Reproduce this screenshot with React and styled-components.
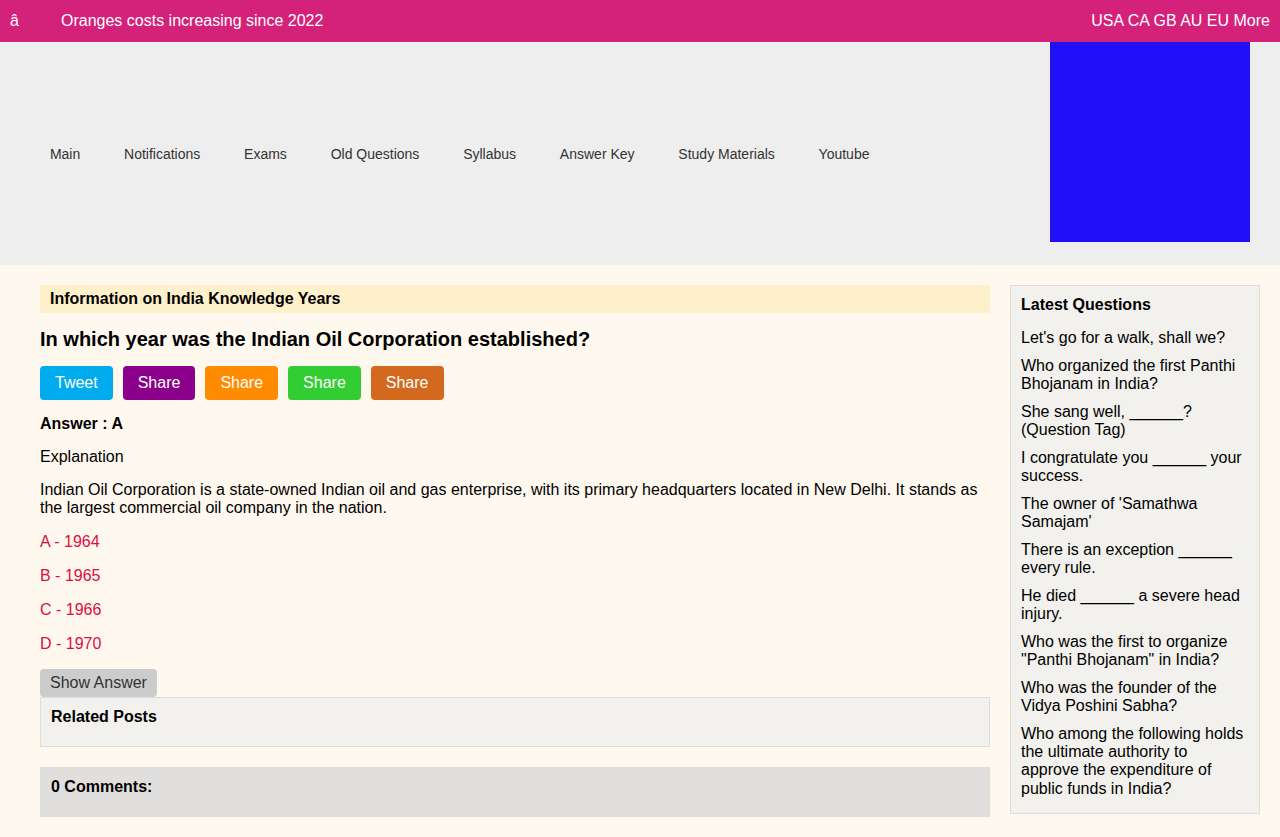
import React from "react";
import styled, { createGlobalStyle } from "styled-components";

const GlobalStyle = createGlobalStyle`
  html, body {
    margin: 0;
    padding: 0;
    background: #fff8ee;
    font-family: "Liberation Sans", Arial, sans-serif;
    color: #000;
  }
  * {
    box-sizing: border-box;
  }
`;

const TopBar = styled.div`
  height: 42px;
  background: #d4217a;
  color: #fff;
  font-size: 16px;
  display: flex;
  align-items: center;
  padding: 0 10px;
`;

const Glyph = styled.span`
  width: 51px;
`;

const Ticker = styled.span`
  flex: 1;
`;

const Regions = styled.span`
  white-space: nowrap;
`;

const Header = styled.header`
  height: 223px;
  background: #eeeeee;
  display: flex;
  align-items: center;
  padding: 0 30px 0 28px;
`;

const Nav = styled.nav`
  flex: 1;
  display: flex;
`;

const NavLink = styled.a`
  font-size: 14px;
  color: #333;
  padding: 0 21.9px;
  text-decoration: none;
  cursor: pointer;
`;

const Banner = styled.div`
  width: 200px;
  height: 200px;
  background: #2010f8;
  align-self: flex-start;
`;

const Page = styled.div`
  display: flex;
  gap: 20px;
  padding: 20px 20px 0 40px;
  align-items: flex-start;
`;

const Main = styled.main`
  width: 950px;
`;

const Category = styled.div`
  background: #fff0cc;
  font-weight: bold;
  font-size: 16px;
  line-height: 18px;
  padding: 5px 10px;
`;

const Title = styled.h1`
  font-size: 20px;
  line-height: 23px;
  margin: 15px 0 15px;
`;

const ShareRow = styled.div`
  display: flex;
  gap: 10px;
`;

const ShareButton = styled.a`
  background: ${(p) => p.color};
  color: #fff;
  font-size: 16px;
  line-height: 18px;
  padding: 8px 15px;
  border-radius: 4px;
  cursor: pointer;
`;

const Para = styled.p`
  font-size: 16px;
  line-height: 18px;
  margin: 15px 0;
  font-weight: ${(p) => (p.bold ? "bold" : "normal")};
`;

const Option = styled.p`
  font-size: 16px;
  line-height: 18px;
  margin: 16px 0;
  color: #dc0d3f;
`;

const ShowButton = styled.button`
  display: block;
  font-family: inherit;
  font-size: 16px;
  line-height: 18px;
  color: #333;
  background: #cccccc;
  border: none;
  border-radius: 4px;
  padding: 5px 10px;
  margin-top: 16px;
`;

const Panel = styled.div`
  background: ${(p) => p.bg};
  border: ${(p) => (p.bordered ? "1px solid #dddddd" : "none")};
  padding: ${(p) => (p.bordered ? "10px 10px 20px" : "11px 11px 21px")};
  margin-bottom: 20px;
  font-weight: bold;
  font-size: 16px;
  line-height: 18px;
`;

const Sidebar = styled.aside`
  width: 250px;
  background: #f2f1ed;
  border: 1px solid #dddddd;
  padding: 10px 10px 6px;
`;

const SideHeading = styled.div`
  font-weight: bold;
  font-size: 16px;
  line-height: 18px;
  margin-bottom: 15px;
`;

const QuestionList = styled.ul`
  list-style: none;
  margin: 0;
  padding: 0;
`;

const QuestionItem = styled.li`
  font-size: 16px;
  line-height: 18.4px;
  margin-bottom: 9.2px;
`;

const navItems = [
  "Main",
  "Notifications",
  "Exams",
  "Old Questions",
  "Syllabus",
  "Answer Key",
  "Study Materials",
  "Youtube",
];

const shares = [
  { label: "Tweet", color: "#00acee" },
  { label: "Share", color: "#8b008b" },
  { label: "Share", color: "#ff8c00" },
  { label: "Share", color: "#32cd32" },
  { label: "Share", color: "#d2691e" },
];

const options = ["A - 1964", "B - 1965", "C - 1966", "D - 1970"];

const latest = [
  "Let's go for a walk, shall we?",
  "Who organized the first Panthi Bhojanam in India?",
  "She sang well, ______? (Question Tag)",
  "I congratulate you ______ your success.",
  "The owner of 'Samathwa Samajam'",
  "There is an exception ______ every rule.",
  "He died ______ a severe head injury.",
  'Who was the first to organize "Panthi Bhojanam" in India?',
  "Who was the founder of the Vidya Poshini Sabha?",
  "Who among the following holds the ultimate authority to approve the expenditure of public funds in India?",
];

export default function App() {
  return (
    <>
      <GlobalStyle />
      <TopBar>
        <Glyph>â</Glyph>
        <Ticker>Oranges costs increasing since 2022</Ticker>
        <Regions>USA CA GB AU EU More</Regions>
      </TopBar>
      <Header>
        <Nav>
          {navItems.map((item) => (
            <NavLink key={item}>{item}</NavLink>
          ))}
        </Nav>
        <Banner />
      </Header>
      <Page>
        <Main>
          <Category>Information on India Knowledge Years</Category>
          <Title>In which year was the Indian Oil Corporation established?</Title>
          <ShareRow>
            {shares.map((s, i) => (
              <ShareButton key={i} color={s.color}>
                {s.label}
              </ShareButton>
            ))}
          </ShareRow>
          <Para bold>Answer : A</Para>
          <Para>Explanation</Para>
          <Para>
            Indian Oil Corporation is a state-owned Indian oil and gas
            enterprise, with its primary headquarters located in New Delhi. It
            stands as the largest commercial oil company in the nation.
          </Para>
          {options.map((o) => (
            <Option key={o}>{o}</Option>
          ))}
          <ShowButton>Show Answer</ShowButton>
          <Panel bg="#f2f1ed" bordered>
            Related Posts
          </Panel>
          <Panel bg="#e0dfdd">0 Comments:</Panel>
        </Main>
        <Sidebar>
          <SideHeading>Latest Questions</SideHeading>
          <QuestionList>
            {latest.map((q) => (
              <QuestionItem key={q}>{q}</QuestionItem>
            ))}
          </QuestionList>
        </Sidebar>
      </Page>
    </>
  );
}
